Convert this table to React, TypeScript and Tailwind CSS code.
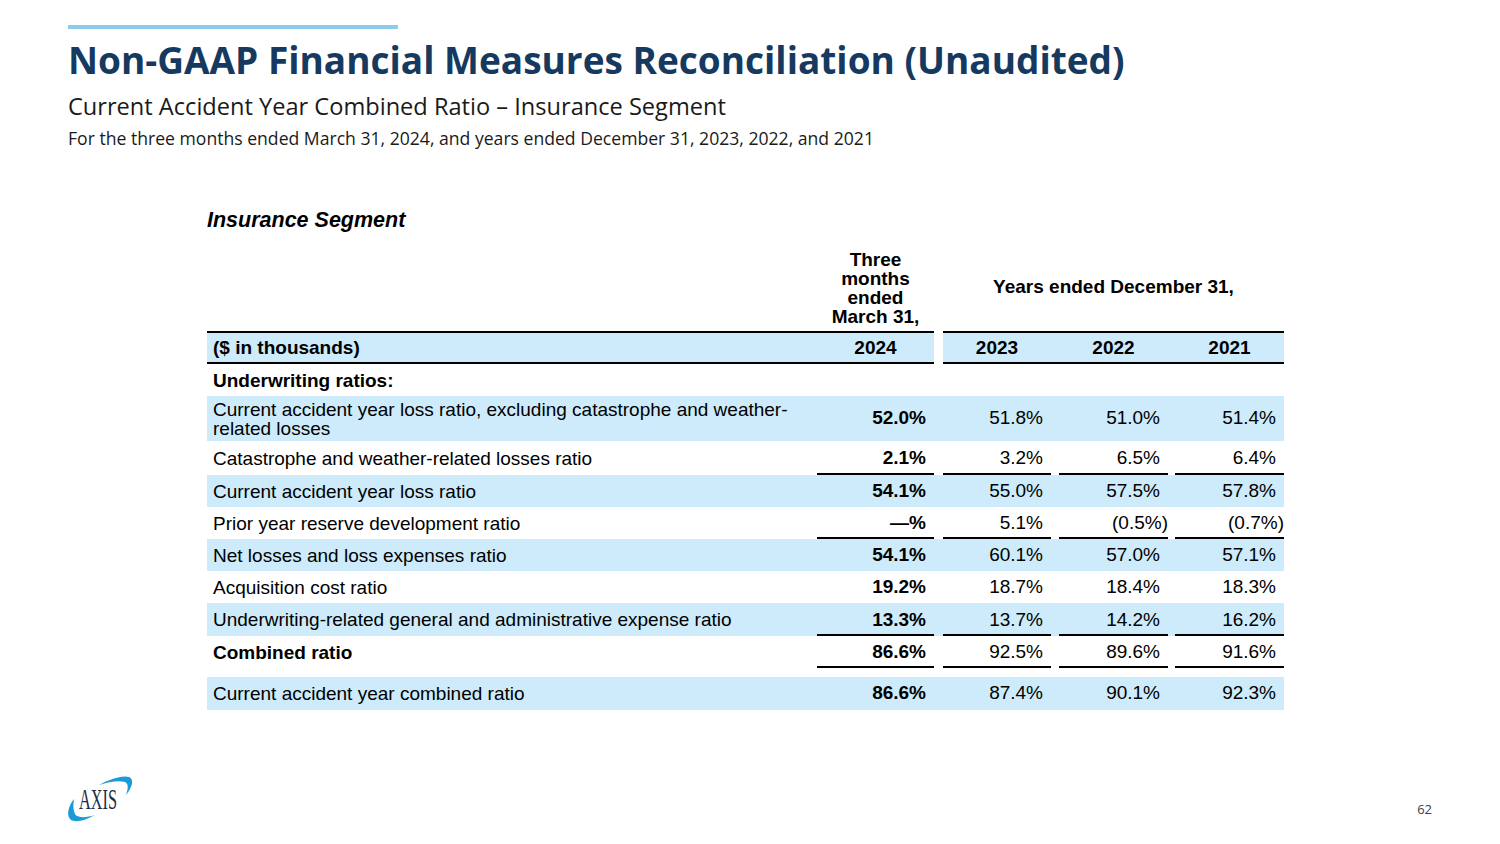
import React from 'react';

type Row = {
  label: React.ReactNode;
  vals: string[];
  blue?: boolean;
  bold?: boolean;
  line?: boolean;
  h: string;
};

const rows: Row[] = [
  { label: 'Underwriting ratios:', vals: ['', '', '', ''], bold: true, h: 'h-[32px]' },
  {
    label: (
      <>
        Current accident year loss ratio, excluding catastrophe and weather-
        <br />
        related losses
      </>
    ),
    vals: ['52.0%', '51.8%', '51.0%', '51.4%'],
    blue: true,
    h: 'h-[45px]',
  },
  { label: 'Catastrophe and weather-related losses ratio', vals: ['2.1%', '3.2%', '6.5%', '6.4%'], line: true, h: 'h-[34px]' },
  { label: 'Current accident year loss ratio', vals: ['54.1%', '55.0%', '57.5%', '57.8%'], blue: true, h: 'h-[32px]' },
  { label: 'Prior year reserve development ratio', vals: ['—%', '5.1%', '(0.5%)', '(0.7%)'], line: true, h: 'h-[32px]' },
  { label: 'Net losses and loss expenses ratio', vals: ['54.1%', '60.1%', '57.0%', '57.1%'], blue: true, h: 'h-[32px]' },
  { label: 'Acquisition cost ratio', vals: ['19.2%', '18.7%', '18.4%', '18.3%'], h: 'h-[32px]' },
  { label: 'Underwriting-related general and administrative expense ratio', vals: ['13.3%', '13.7%', '14.2%', '16.2%'], blue: true, line: true, h: 'h-[33px]' },
  { label: 'Combined ratio', vals: ['86.6%', '92.5%', '89.6%', '91.6%'], bold: true, line: true, h: 'h-[32px]' },
];

const lastRow: Row = { label: 'Current accident year combined ratio', vals: ['86.6%', '87.4%', '90.1%', '92.3%'], blue: true, h: 'h-[33px]' };

// left gaps before each value column (the underline breaks)
const gaps = ['pl-0', 'pl-[9px]', 'pl-[8px]', 'pl-[7px]'];
const widths = ['w-[117px]', 'w-[117px]', 'w-[117px]', 'w-[116px]'];

function ValueCell({ v, i, line }: { v: string; i: number; line?: boolean }) {
  const neg = v.startsWith('(');
  return (
    <div className={`${widths[i]} ${gaps[i]} h-full`}>
      <div
        className={`h-full flex items-center justify-end ${neg ? 'pr-0' : 'pr-2'} ${line ? 'pt-[3px] border-b-2 border-black' : ''} ${i === 0 ? 'font-bold' : ''}`}
      >
        {v}
      </div>
    </div>
  );
}

function TableRow({ r }: { r: Row }) {
  return (
    <div className={`flex w-[1077px] ${r.h} ${r.blue ? 'bg-[#cdebfa]' : ''}`}>
      <div className={`w-[610px] flex items-center pl-1.5 leading-[19px] ${r.bold ? 'font-bold' : ''}`}>{r.label}</div>
      {r.vals.map((v, i) => (
        <ValueCell key={i} v={v} i={i} line={r.line} />
      ))}
    </div>
  );
}

function AxisLogo() {
  return (
    <svg width="74" height="52" viewBox="0 0 74 52" className="overflow-visible">
      <path d="M37 13 C48 7 60 3 67 5 C72 7 71 14 64 23 C66 17 67 12 63 10 C56 8 47 10 37 13 Z" fill="#1b9ad8" />
      <path d="M12 27 C6 34 4 44 9 48 C14 51 24 48 33 43 C24 46 15 46 13 42 C11 38 11 33 12 27 Z" fill="#1b9ad8" />
      <text
        x="17"
        y="37"
        textLength="38"
        lengthAdjust="spacingAndGlyphs"
        fontFamily="'Liberation Serif', serif"
        fontSize="30"
        fill="#1d2d4c"
      >
        AXIS
      </text>
    </svg>
  );
}

export default function App() {
  return (
    <div className="w-[1500px] h-[844px] bg-white flex flex-col overflow-hidden text-black">
      {/* Slide header */}
      <div className="pl-[68px] pt-[25px]">
        <div className="w-[330px] h-[4px] bg-[#8ccbea]" />
        <h1 className="mt-[9px] text-[37px] leading-[44px] font-bold text-[#163a5f] font-['Open_Sans',sans-serif]">
          Non-GAAP Financial Measures Reconciliation (Unaudited)
        </h1>
        <p className="mt-[8px] text-[23.6px] leading-[32px] text-[#1a1a1a] font-['Open_Sans',sans-serif]">
          Current Accident Year Combined Ratio – Insurance Segment
        </p>
        <p className="mt-[4px] text-[17.6px] leading-[24px] text-[#1a1a1a] font-['Open_Sans',sans-serif]">
          For the three months ended March 31, 2024, and years ended December 31, 2023, 2022, and 2021
        </p>
      </div>

      {/* Table */}
      <div className="pl-[207px] mt-[58px] font-['Liberation_Sans',Arial,sans-serif] text-[19px]">
        <div className="text-[21.5px] leading-[24px] font-bold italic">Insurance Segment</div>

        <div className="flex w-[1077px] mt-[18px] mb-[5px] font-bold leading-[19px]">
          <div className="w-[610px]" />
          <div className="w-[117px] text-center">
            Three
            <br />
            months
            <br />
            ended
            <br />
            March 31,
          </div>
          <div className="w-[350px] pl-[9px] pb-[4px] flex items-center justify-center">Years ended December 31,</div>
        </div>

        {/* Year band */}
        <div className="flex w-[1077px] font-bold h-[33px]">
          <div className="w-[727px] flex pt-[2px] border-y-2 border-black bg-[#cdebfa]">
            <div className="w-[610px] flex items-center pl-1.5">($ in thousands)</div>
            <div className="w-[117px] flex items-center justify-center">2024</div>
          </div>
          <div className="ml-[9px] w-[341px] flex pt-[2px] border-y-2 border-black bg-[#cdebfa]">
            <div className="w-[108px] flex items-center justify-center">2023</div>
            <div className="w-[117px] pl-[8px] flex items-center justify-center">2022</div>
            <div className="w-[116px] pl-[7px] flex items-center justify-center">2021</div>
          </div>
        </div>

        {rows.map((r, i) => (
          <TableRow key={i} r={r} />
        ))}
        <div className="h-[9px]" />
        <TableRow r={lastRow} />
      </div>

      {/* Footer */}
      <div className="mt-auto flex justify-between items-end pl-[62px] pr-[68px] pb-[20px]">
        <AxisLogo />
        <div className="mb-[7px] text-[13px] leading-[16px] text-[#404040] font-['Open_Sans',sans-serif]">62</div>
      </div>
    </div>
  );
}
